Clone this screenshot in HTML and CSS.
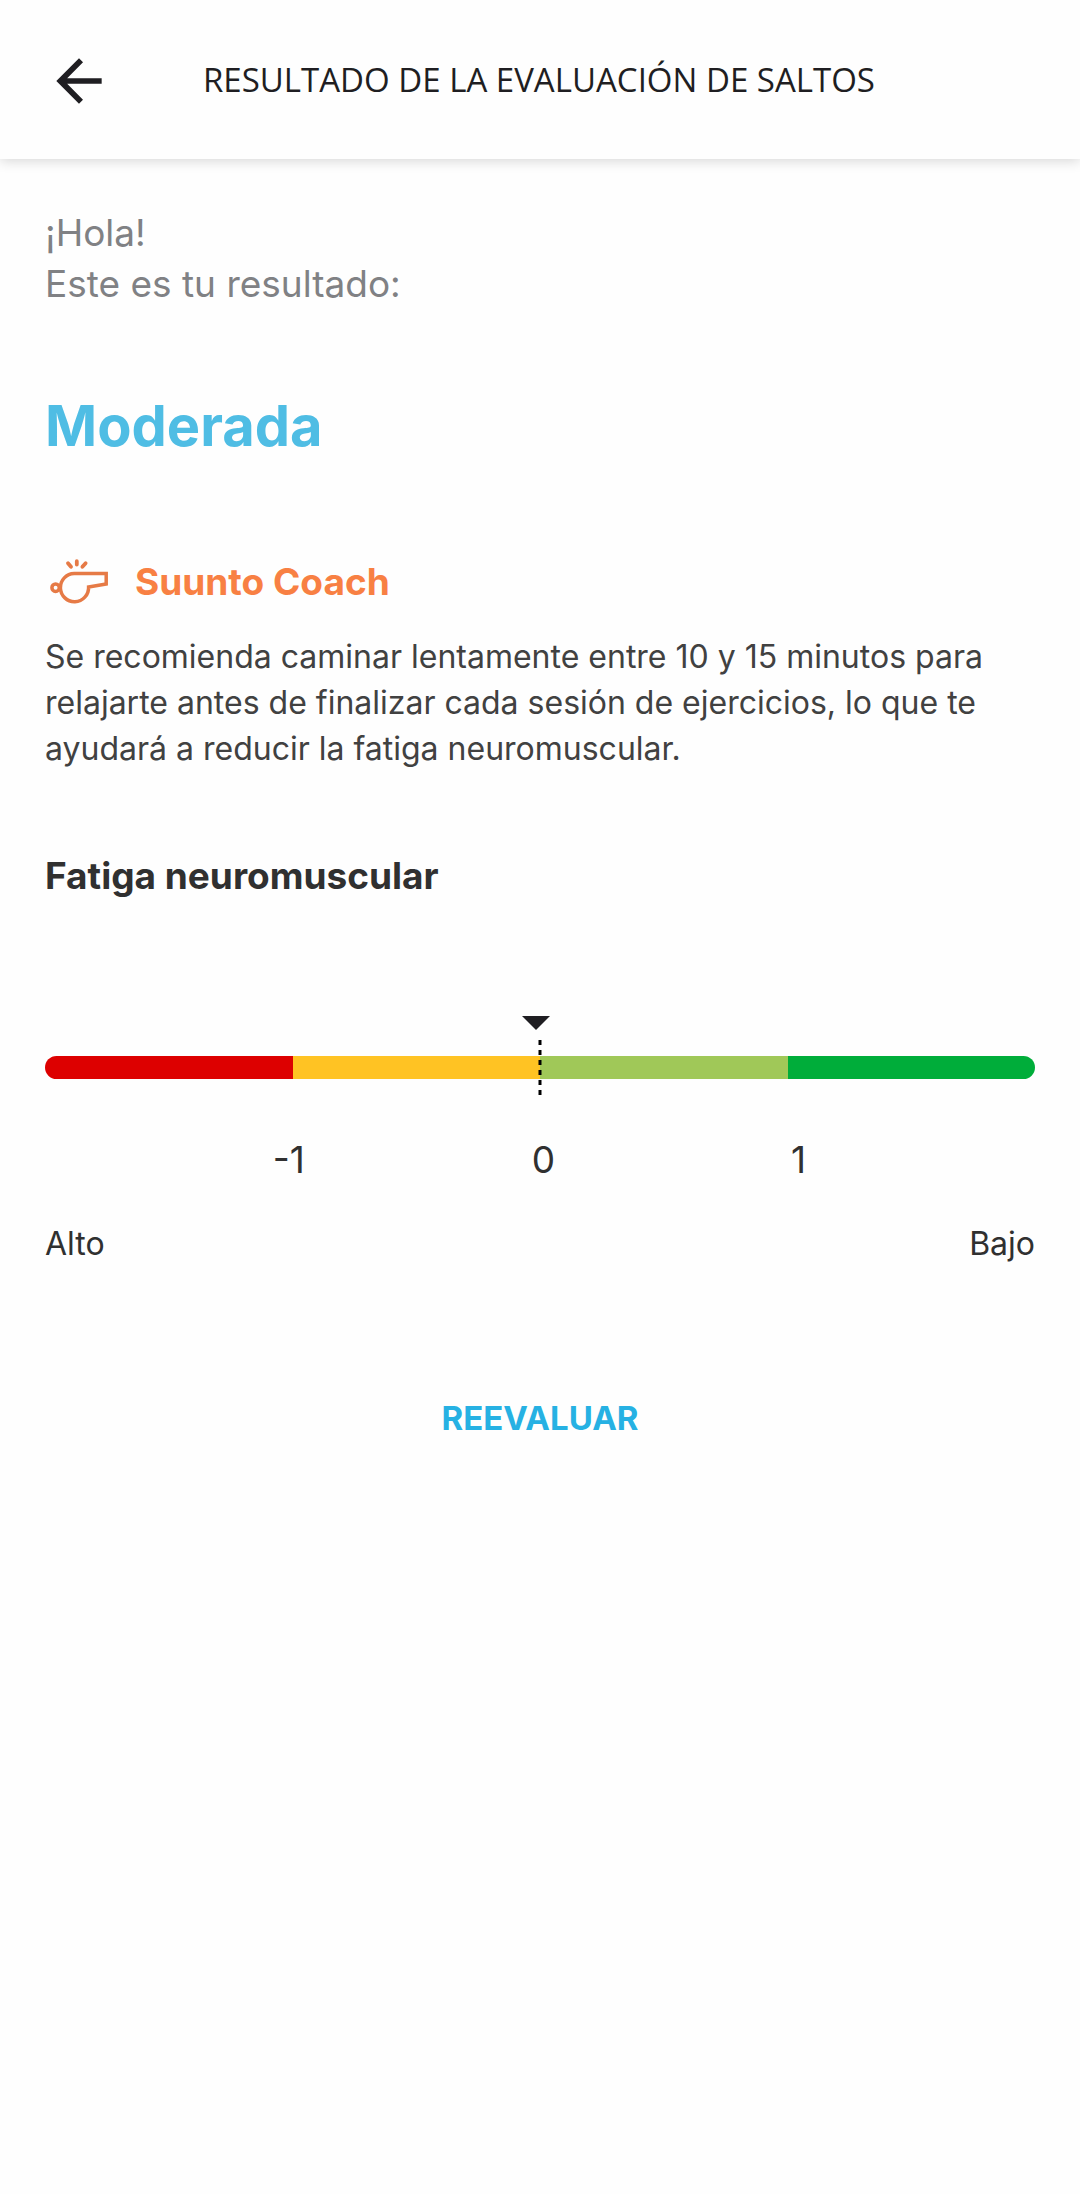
FILE: index.html
```html
<!DOCTYPE html>
<html lang="es">
<head>
    <meta charset="UTF-8">
    <meta name="viewport" content="width=device-width, initial-scale=1.0">
    <title>Resultado de la evaluación de saltos</title>
    <link rel="stylesheet" href="styles.css">
</head>
<body>
    <header class="header">
        <button class="btn-back" aria-label="Atrás">
            <svg viewBox="0 0 24 24" width="68" height="68" fill="currentColor">
                <path d="M20 11H7.83l5.59-5.59L12 4l-8 8 8 8 1.41-1.41L7.83 13H20v-2z"/>
            </svg>
        </button>
        <h1>RESULTADO DE LA EVALUACIÓN DE SALTOS</h1>
    </header>

    <main class="content">
        <p class="greeting">¡Hola!<br>Este es tu resultado:</p>
        <p class="result">Moderada</p>

        <section class="coach">
            <div class="coach-title">
                <!-- whistle -->
                <svg viewBox="0 0 66 51" width="66" height="51" fill="none" stroke="#e67a46" stroke-width="3.5">
                    <circle cx="10.6" cy="31.7" r="3.7"/>
                    <path d="M29.2 17.5H61.2V28L43.6 31A14.1 14.1 0 1 1 29.2 17.5Z"/>
                    <path d="M23 7.2l3 3.6M31.8 5.2v3.4M40.6 7.2l-3.2 3.6" stroke-width="3.8" stroke-linecap="round"/>
                </svg>
                <h2>Suunto Coach</h2>
            </div>
            <p class="coach-text">Se recomienda caminar lentamente entre 10 y 15 minutos para relajarte antes de finalizar cada sesión de ejercicios, lo que te ayudará a reducir la fatiga neuromuscular.</p>
        </section>

        <section class="fatigue">
            <h2>Fatiga neuromuscular</h2>
            <div class="scale">
                <div class="scale-bar">
                    <span class="red"></span>
                    <span class="yellow"></span>
                    <span class="lime"></span>
                    <span class="green"></span>
                </div>
                <div class="zero-line"></div>
                <div class="marker" style="left: 49.6%"></div>
            </div>
            <div class="scale-values">
                <span>-1</span>
                <span>0</span>
                <span>1</span>
            </div>
            <div class="scale-ends">
                <span>Alto</span>
                <span>Bajo</span>
            </div>
        </section>

        <button class="btn-retry">REEVALUAR</button>
    </main>
</body>
</html>
```
FILE: styles.css
```css
* {
    box-sizing: border-box;
    margin: 0;
    padding: 0;
}

body {
    background: #fefefe;
    color: #303030;
    font-family: Inter, "Liberation Sans", sans-serif;
    font-size: 32px;
    line-height: 46px;
}

button {
    border: none;
    background: none;
    cursor: pointer;
}

h2 {
    font-size: 37px;
    line-height: 51px;
}

.header {
    display: flex;
    align-items: flex-start;
    gap: 90px;
    padding: 47px 45px 44px;
    background: #fefefe;
    color: #1f1e22;
    box-shadow: 0 2px 12px rgba(0, 0, 0, 0.16);
}

.header h1 {
    font-family: "Open Sans", sans-serif;
    font-size: 33px;
    font-weight: 400;
    line-height: 66px;
}

.btn-back {
    height: 68px;
    color: inherit;
}

.btn-back svg {
    display: block;
}

.content {
    display: flex;
    flex-direction: column;
    padding: 48px 45px;
}

.greeting {
    color: #808184;
    font-size: 37px;
    line-height: 51px;
}

.result {
    margin-top: 84px;
    color: #4fbde4;
    font-size: 56px;
    font-weight: 700;
    line-height: 66px;
}

.coach {
    margin-top: 97px;
}

.coach-title {
    display: flex;
    align-items: center;
    gap: 24px;
    color: #f88043;
}

.coach-text {
    margin-top: 27px;
    color: #414141;
}

.fatigue {
    margin-top: 78px;
}

.scale {
    position: relative;
    margin-top: 155px;
}

.scale-bar {
    display: flex;
    height: 23px;
    border-radius: 12px;
    overflow: hidden;
}

.scale-bar span {
    flex: 1;
}

.red {
    background: #dd0000;
}

.yellow {
    background: #ffc323;
}

.lime {
    background: #a0c858;
}

.green {
    background: #00ad3a;
}

.zero-line {
    position: absolute;
    top: -16px;
    left: 50%;
    width: 3px;
    height: 55px;
    background: repeating-linear-gradient(#000 0 5px, transparent 5px 10px);
    transform: translateX(-50%);
}

.marker {
    position: absolute;
    top: -40px;
    border: 14px solid transparent;
    border-top-color: #1f1e22;
    border-bottom: none;
    transform: translateX(-50%);
}

.scale-values {
    display: grid;
    grid-template-columns: repeat(3, 34%);
    margin-top: 55px;
    padding-left: 23%;
    font-size: 37px;
    line-height: 51px;
}

.scale-ends {
    display: flex;
    justify-content: space-between;
    margin-top: 36px;
}

.btn-retry {
    align-self: center;
    margin-top: 104px;
    padding: 24px;
    color: #26b1e3;
    font: inherit;
    font-size: 33px;
    font-weight: 700;
}
```
